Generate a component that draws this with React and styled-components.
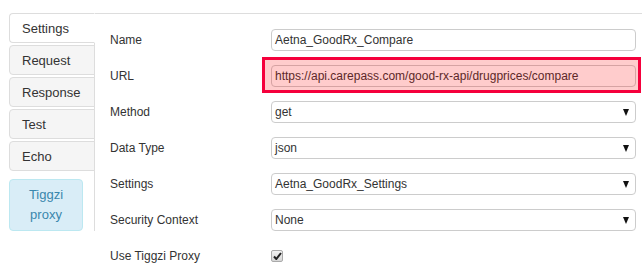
import React from 'react';
import styled, { createGlobalStyle } from 'styled-components';

const GlobalStyle = createGlobalStyle`
  body {
    margin: 0;
    background: #fff;
    font-family: "Liberation Sans", Arial, sans-serif;
    color: #333;
  }
`;

const Page = styled.div`
  display: flex;
  width: 642px;
  height: 274px;
  padding: 13px 0 0 9px;
  box-sizing: border-box;
  overflow: hidden;
`;

const Nav = styled.div`
  width: 85px;
  height: 218px;
  border-right: 1px solid #ddd;
  display: flex;
  flex-direction: column;
  gap: 2px;
  flex-shrink: 0;
`;

const Tab = styled.div`
  height: 30px;
  margin-right: -1px;
  padding-left: 12px;
  display: flex;
  align-items: center;
  font-size: 13px;
  color: #333;
  border: 1px solid #ddd;
  border-radius: 4px 0 0 4px;
  box-sizing: border-box;
  background: ${p => (p.active ? '#fff' : '#f5f5f5')};
  border-right-color: ${p => (p.active ? '#fff' : '#ddd')};
  position: relative;
`;

const Proxy = styled.div`
  margin-top: 6px;
  width: 74px;
  height: 52px;
  box-sizing: border-box;
  background: #d9edf7;
  border: 1px solid #bce8f1;
  border-radius: 4px;
  color: #3a87ad;
  font-size: 13px;
  line-height: 20px;
  text-align: center;
  display: flex;
  align-items: center;
  justify-content: center;
`;

const Content = styled.div`
  flex: 1;
  border-top: 1px solid #ddd;
  padding: 8px 6px 0 15px;
  display: flex;
  flex-direction: column;
`;

const Row = styled.div`
  height: 36px;
  display: grid;
  grid-template-columns: 161px 1fr;
  align-items: center;
  font-size: 12px;
`;

const Label = styled.div`
  color: #333;
`;

const Field = styled.div`
  height: 22px;
  box-sizing: border-box;
  border: 1px solid #ccc;
  border-radius: 4px;
  background: #fff;
  padding: 0 5px 0 3px;
  display: flex;
  align-items: center;
  justify-content: space-between;
  font-size: 12px;
  color: #333;
`;

const Arrow = styled.span`
  width: 0;
  height: 0;
  border-left: 3.5px solid transparent;
  border-right: 3.5px solid transparent;
  border-top: 7px solid #111;
  margin-right: 1px;
`;

const Highlight = styled.div`
  position: relative;

  &::after {
    content: '';
    position: absolute;
    top: -8px;
    bottom: -6px;
    left: -9px;
    right: -5px;
    border: 3px solid #f5003c;
    background: rgba(255, 0, 0, 0.2);
    pointer-events: none;
  }
`;

const Check = styled.span`
  width: 12px;
  height: 12px;
  box-sizing: border-box;
  border: 1px solid #aaa;
  border-radius: 2px;
  background: linear-gradient(#f2f2f2, #d6d6d6);
  display: flex;
  align-items: center;
  justify-content: center;
`;

const tabs = ['Settings', 'Request', 'Response', 'Test', 'Echo'];

function Select({ value }) {
  return (
    <Field>
      <span>{value}</span>
      <Arrow />
    </Field>
  );
}

export default function App() {
  return (
    <>
      <GlobalStyle />
      <Page>
        <Nav>
          {tabs.map((t, i) => (
            <Tab key={t} active={i === 0}>{t}</Tab>
          ))}
          <Proxy>Tiggzi<br />proxy</Proxy>
        </Nav>
        <Content>
          <Row>
            <Label>Name</Label>
            <Field>Aetna_GoodRx_Compare</Field>
          </Row>
          <Row>
            <Label>URL</Label>
            <Highlight>
              <Field>https://api.carepass.com/good-rx-api/drugprices/compare</Field>
            </Highlight>
          </Row>
          <Row>
            <Label>Method</Label>
            <Select value="get" />
          </Row>
          <Row>
            <Label>Data Type</Label>
            <Select value="json" />
          </Row>
          <Row>
            <Label>Settings</Label>
            <Select value="Aetna_GoodRx_Settings" />
          </Row>
          <Row>
            <Label>Security Context</Label>
            <Select value="None" />
          </Row>
          <Row>
            <Label>Use Tiggzi Proxy</Label>
            <Check>
              <svg width="9" height="8" viewBox="0 0 9 8">
                <path d="M1 4.5 L3.3 7 L8 1" fill="none" stroke="#222" strokeWidth="2" />
              </svg>
            </Check>
          </Row>
        </Content>
      </Page>
    </>
  );
}
